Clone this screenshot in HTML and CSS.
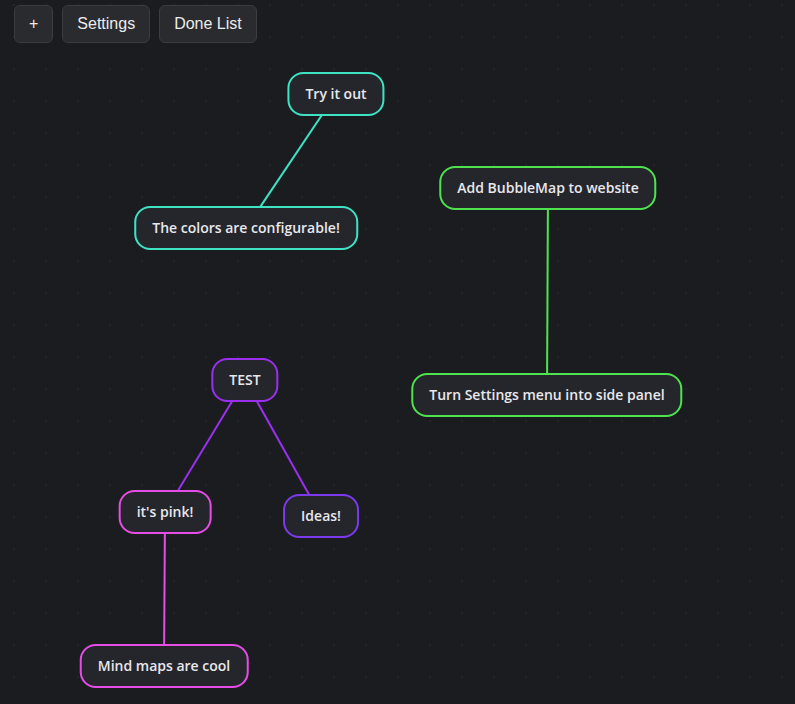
FILE: index.html
```html
<!DOCTYPE html>
<html lang="en">
<head>
<meta charset="utf-8">
<title>BubbleMap</title>
<link rel="stylesheet" href="styles.css">
</head>
<body>
<div class="app">
  <svg class="canvas" width="795" height="704" xmlns="http://www.w3.org/2000/svg">
    <defs>
      <pattern id="dots" x="13" y="4" width="32" height="32" patternUnits="userSpaceOnUse">
        <rect x="0" y="0" width="2" height="2" class="dot"/>
      </pattern>
    </defs>
    <rect width="100%" height="100%" fill="url(#dots)"/>
    <!-- connections run centre to centre, coloured by the parent bubble -->
    <line x1="336" y1="94" x2="246" y2="228" class="link teal"/>
    <line x1="548" y1="188" x2="547" y2="395" class="link green"/>
    <line x1="245" y1="380" x2="165" y2="512" class="link purple"/>
    <line x1="245" y1="380" x2="321" y2="516" class="link purple"/>
    <line x1="165" y1="512" x2="164" y2="666" class="link pink"/>
  </svg>

  <div class="toolbar">
    <button class="btn">+</button>
    <button class="btn">Settings</button>
    <button class="btn">Done List</button>
  </div>

  <div class="bubble teal" style="left:336px;top:94px">Try it out</div>
  <div class="bubble teal" style="left:246px;top:228px">The colors are configurable!</div>
  <div class="bubble green" style="left:548px;top:188px">Add BubbleMap to website</div>
  <div class="bubble green" style="left:547px;top:395px">Turn Settings menu into side panel</div>
  <div class="bubble purple" style="left:245px;top:380px">TEST</div>
  <div class="bubble pink" style="left:165px;top:512px">it's pink!</div>
  <div class="bubble violet" style="left:321px;top:516px">Ideas!</div>
  <div class="bubble pink" style="left:164px;top:666px">Mind maps are cool</div>
</div>
</body>
</html>
```
FILE: styles.css
```css
html, body {
  margin: 0;
  padding: 0;
  background: #1b1c20;
  overflow: hidden;
}

.app {
  position: relative;
  width: 795px;
  height: 704px;
  background: #1b1c20;
}

.canvas {
  position: absolute;
  left: 0;
  top: 0;
}

.dot {
  fill: #25262b;
}

.link {
  stroke-width: 2;
}
line.teal { stroke: #3ee3c4; }
line.green { stroke: #4ee34e; }
line.purple { stroke: #9a2ff0; }
line.pink { stroke: #e64ce6; }

.toolbar {
  position: relative;
  display: flex;
  gap: 9px;
  padding: 5px 14px;
}

.btn {
  height: 38px;
  padding: 0 14px;
  border: 1px solid #3b3c41;
  border-radius: 6px;
  background: #2a2b2f;
  color: #ececec;
  font-family: "Liberation Sans", Arial, sans-serif;
  font-size: 16px;
}

.bubble {
  position: absolute;
  transform: translate(-50%, -50%);
  white-space: nowrap;
  padding: 11px 16px;
  line-height: 18px;
  border: 2px solid;
  border-radius: 16px;
  background: #25262c;
  color: #e8e8ec;
  font-family: "Open Sans", "Noto Sans", sans-serif;
  font-size: 14px;
  font-weight: 600;
}

.bubble.teal { border-color: #3ee3c4; }
.bubble.green { border-color: #4ee34e; }
.bubble.purple { border-color: #9a2ff0; }
.bubble.pink { border-color: #e64ce6; }
.bubble.violet { border-color: #7b3aee; }
```
